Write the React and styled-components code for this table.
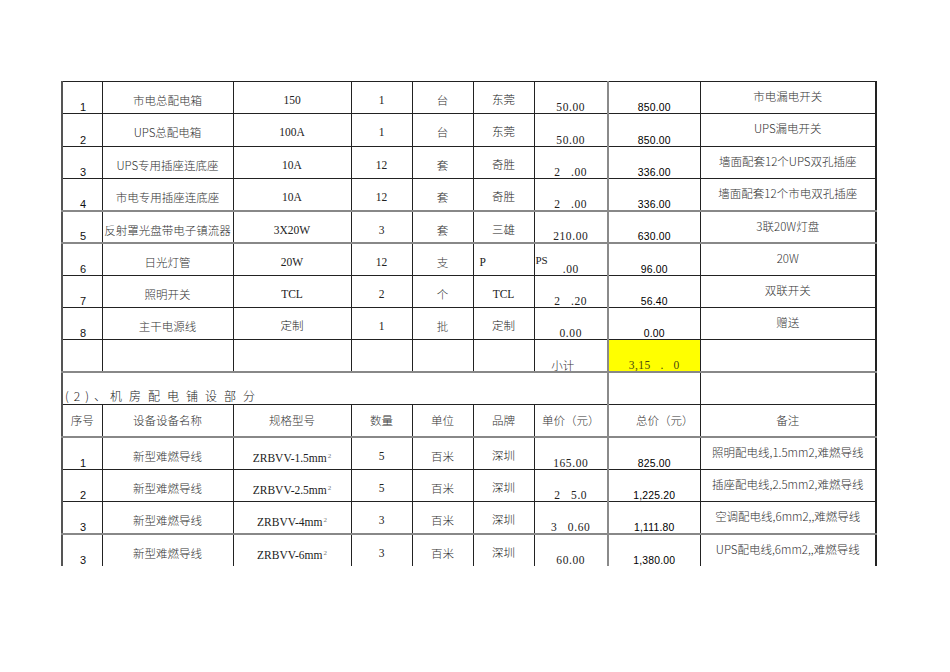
import React from 'react';
import styled, { createGlobalStyle } from 'styled-components';

const cols = [40, 131, 118, 61, 61, 61, 74, 92, 176];

const equipment = [
  { no: '1', name: '市电总配电箱', spec: '150', qty: '1', unit: '台', brand: '东莞', price: '50.00', total: '850.00', note: '市电漏电开关' },
  { no: '2', name: 'UPS总配电箱', spec: '100A', qty: '1', unit: '台', brand: '东莞', price: '50.00', total: '850.00', note: 'UPS漏电开关' },
  { no: '3', name: 'UPS专用插座连底座', spec: '10A', qty: '12', unit: '套', brand: '奇胜', price: '2   .00', total: '336.00', note: '墙面配套12个UPS双孔插座' },
  { no: '4', name: '市电专用插座连底座', spec: '10A', qty: '12', unit: '套', brand: '奇胜', price: '2   .00', total: '336.00', note: '墙面配套12个市电双孔插座' },
  { no: '5', name: '反射罩光盘带电子镇流器', spec: '3X20W', qty: '3', unit: '套', brand: '三雄', price: '210.00', total: '630.00', note: '3联20W灯盘', soft: true },
  { no: '6', name: '日光灯管', spec: '20W', qty: '12', unit: '支', brand: 'P', brandLeft: true, tag: 'PS', price: '.00', total: '96.00', note: '20W', soft: true },
  { no: '7', name: '照明开关', spec: 'TCL', qty: '2', unit: '个', brand: 'TCL', price: '2   .20', total: '56.40', note: '双联开关' },
  { no: '8', name: '主干电源线', spec: '定制', qty: '1', unit: '批', brand: '定制', price: '0.00', total: '0.00', note: '赠送' },
];

const wiring = [
  { no: '1', name: '新型难燃导线', spec: 'ZRBVV-1.5mm', qty: '5', unit: '百米', brand: '深圳', price: '165.00', total: '825.00', note: '照明配电线,1.5mm2,难燃导线', soft: true },
  { no: '2', name: '新型难燃导线', spec: 'ZRBVV-2.5mm', qty: '5', unit: '百米', brand: '深圳', price: '2   5.0', total: '1,225.20', note: '插座配电线,2.5mm2,难燃导线' },
  { no: '3', name: '新型难燃导线', spec: 'ZRBVV-4mm', qty: '3', unit: '百米', brand: '深圳', price: '3   0.60', total: '1,111.80', note: '空调配电线,6mm2,,难燃导线' },
  { no: '3', name: '新型难燃导线', spec: 'ZRBVV-6mm', qty: '3', unit: '百米', brand: '深圳', price: '60.00', total: '1,380.00', note: 'UPS配电线,6mm2,,难燃导线', soft: true, last: true },
];

const heads = ['序号', '设备设备名称', '规格型号', '数量', '单位', '品牌', '单价（元）', '总价（元）', '备注'];

const GlobalStyle = createGlobalStyle`
  html, body { margin: 0; padding: 0; background: #fff; }
  body { font-family: "Noto Sans CJK SC", sans-serif; color: #333; }
`;

const Page = styled.div`
  width: 950px;
  height: 672px;
  box-sizing: border-box;
  padding: 81px 0 0 61px;
  overflow: hidden;
`;

const Sheet = styled.table`
  border-collapse: collapse;
  table-layout: fixed;
  width: 814px;
  border-left: 2px solid #555;
  border-right: 2px solid #222;
`;

const Row = styled.tr`
  height: 32.3px;
  & > td {
    border-top: ${p => (p.$soft ? '2px solid #888' : '1px solid #222')};
    border-bottom: ${p => (p.$last ? 'none' : '')};
  }
`;

const Cell = styled.td`
  border: 1px solid #222;
  padding: 0;
  overflow: hidden;
  white-space: nowrap;
  line-height: 14px;
  vertical-align: top;
  text-align: center;
  &:nth-child(8) { border-left: 2px solid #8a8a8a; }
`;

const NoCell = styled(Cell)`
  vertical-align: bottom;
  text-align: left;
  padding: 0 0 0 17px;
  font-family: "Liberation Sans", sans-serif;
  font-size: 11px;
  line-height: 11px;
  color: #111;
`;

const TextCell = styled(Cell)`
  padding-top: ${p => p.$pt ?? 11}px;
  font-size: 11.5px;
  font-weight: 300;
  color: #333;
`;

const SerifCell = styled(Cell)`
  padding-top: 11px;
  text-align: ${p => (p.$left ? 'left' : 'center')};
  padding-left: ${p => (p.$left ? '6px' : '0')};
  font-family: "Liberation Serif", "Noto Sans CJK SC", serif;
  font-size: 11.5px;
  font-weight: 300;
  color: #222;
  sup { font-size: 7px; color: #777; vertical-align: 4px; margin-left: 1px; }
`;

const PriceCell = styled(Cell)`
  position: relative;
  vertical-align: bottom;
  font-family: "Liberation Serif", serif;
  font-size: 11.5px;
  letter-spacing: 0.6px;
  line-height: 11px;
  color: #222;
  white-space: pre;
`;

const Tag = styled.span`
  position: absolute;
  left: 1px;
  top: 11px;
  letter-spacing: 0;
  font-size: 11px;
`;

const TotalCell = styled(Cell)`
  vertical-align: bottom;
  font-family: "Liberation Sans", sans-serif;
  font-size: 10.4px;
  letter-spacing: 0.2px;
  line-height: 11px;
  color: #000;
  background: ${p => (p.$mark ? '#ffff00' : 'transparent')};
`;

const SumValue = styled(TotalCell)`
  font-family: "Liberation Serif", serif;
  font-size: 11.5px;
  letter-spacing: 0.4px;
  color: #4a4a10;
  white-space: pre;
`;

const Gap = styled(Cell)`
  vertical-align: bottom;
`;

const SumLabel = styled(Gap)`
  padding-right: 16px;
  font-size: 11.5px;
  font-weight: 300;
  line-height: 12px;
  color: #333;
`;

const Section = styled(Gap)`
  text-align: left;
  padding: 0 0 1px 2px;
  font-size: 12px;
  font-weight: 300;
  color: #222;
`;

const Num = styled.span`
  letter-spacing: 5px;
`;

const Spaced = styled.span`
  margin-left: 4px;
  letter-spacing: 7px;
`;

const HeadCell = styled(Cell)`
  vertical-align: middle;
  font-size: 11.5px;
  font-weight: 300;
  color: #333;
  text-align: ${p => (p.$right ? 'right' : 'center')};
  padding-right: ${p => (p.$right ? '6px' : '0')};
`;

const Spec = ({ value, sup }) => (
  <>
    {value}
    {sup && <sup>2</sup>}
  </>
);

const ItemRow = ({ item, sup }) => (
  <Row $soft={item.soft} $last={item.last}>
    <NoCell>{item.no}</NoCell>
    <TextCell>{item.name}</TextCell>
    <SerifCell><Spec value={item.spec} sup={sup} /></SerifCell>
    <SerifCell>{item.qty}</SerifCell>
    <TextCell>{item.unit}</TextCell>
    <SerifCell $left={item.brandLeft}>{item.brand}</SerifCell>
    <PriceCell>
      {item.tag && <Tag>{item.tag}</Tag>}
      {item.price}
    </PriceCell>
    <TotalCell>{item.total}</TotalCell>
    <TextCell $pt={7}>{item.note}</TextCell>
  </Row>
);

export default function App() {
  return (
    <Page>
      <GlobalStyle />
      <Sheet>
        <colgroup>
          {cols.map((w, i) => <col key={i} style={{ width: w }} />)}
        </colgroup>
        <tbody>
          {equipment.map(item => <ItemRow key={item.no} item={item} />)}
          <Row>
            <Gap /><Gap /><Gap /><Gap /><Gap /><Gap />
            <SumLabel>小计</SumLabel>
            <SumValue $mark>{'3,15   .   0'}</SumValue>
            <Gap />
          </Row>
          <Row $soft>
            <Section colSpan={7}>
              <Num>(2)</Num>、<Spaced>机房配电铺设部分</Spaced>
            </Section>
            <Gap style={{ borderLeft: '2px solid #8a8a8a' }} />
            <Gap />
          </Row>
          <Row>
            {heads.map((h, i) => <HeadCell key={h} $right={i === 7}>{h}</HeadCell>)}
          </Row>
          {wiring.map((item, i) => <ItemRow key={i} item={item} sup />)}
        </tbody>
      </Sheet>
    </Page>
  );
}
